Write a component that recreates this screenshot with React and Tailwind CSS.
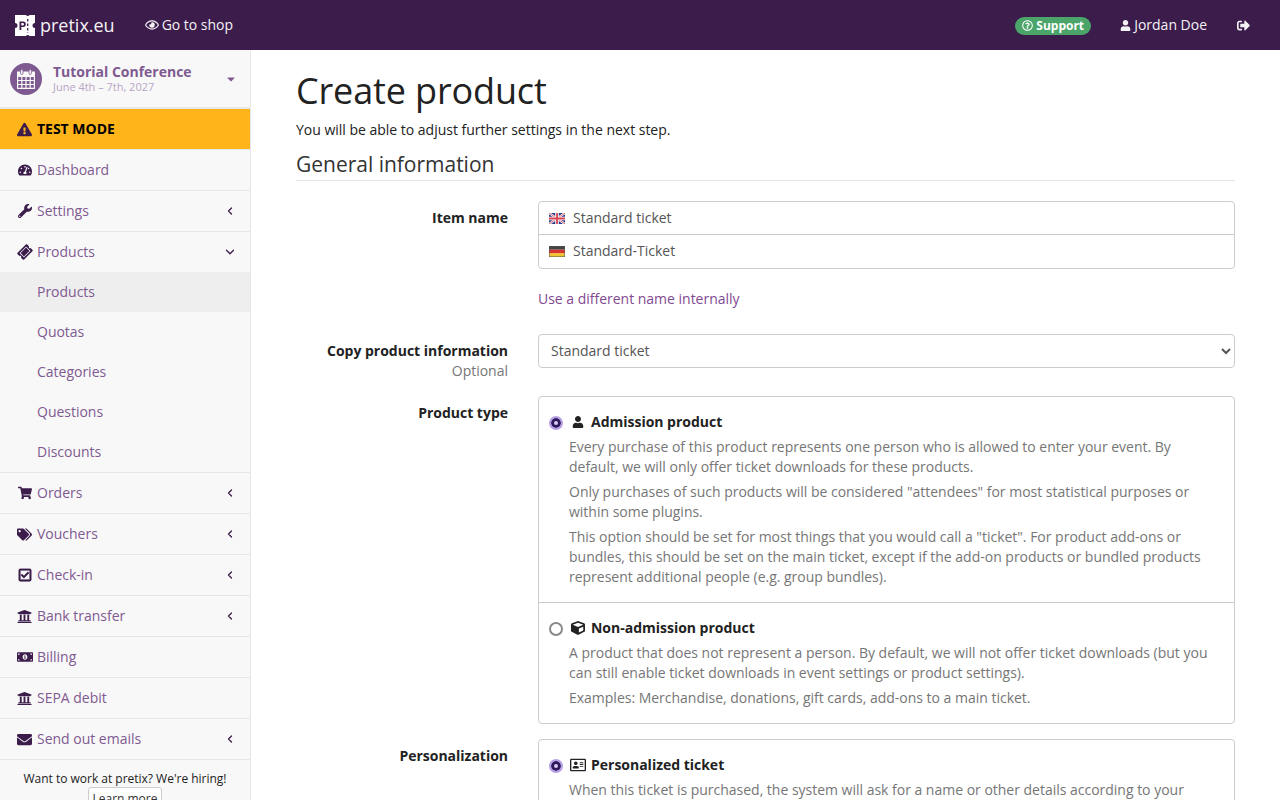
import { useState } from 'react';
import {
  FaRegEye, FaRegQuestionCircle, FaUser, FaSignOutAlt, FaCaretDown,
  FaExclamationTriangle, FaTachometerAlt, FaWrench, FaTicketAlt, FaShoppingCart, FaTags,
  FaRegCheckSquare, FaUniversity, FaMoneyBillAlt, FaEnvelope,
  FaCube, FaRegAddressCard,
} from 'react-icons/fa';
import { ChevronLeft, ChevronDown } from 'lucide-react';

const Logo = () => (
  <svg width="20" height="21" viewBox="0 0 20 21" className="shrink-0">
    <path fill="#fff" d="M0 0h11a2 2 0 0 0 3.500 0H20v8a2.500 2.500 0 0 0 0 5v8h-5.500a2 2 0 0 0-3.500 0H0v-8a2.500 2.500 0 0 0 0-5z" />
    <path stroke="#3b1c4a" strokeWidth="1.300" strokeDasharray="2.500 2" d="M12.700 4v14" />
    <path fill="#3b1c4a" d="M4.500 6.500h3.600a2.700 2.700 0 0 1 0 5.400H6.300v3.100H4.500zM6.300 8v2.400h1.500a1.200 1.200 0 0 0 0-2.400z" />
  </svg>
);

const CalendarIcon = () => (
  <svg width="18" height="20" viewBox="0 0 18 20" className="shrink-0">
    <path fill="none" stroke="#f8f8f8" strokeWidth="1.200" d="M.600 3h16.800v16.400H.600zM.600 7.500h16.800M.600 11.500h16.800M.600 15.500h16.800M4.800 7.500v11.900M9 7.500v11.900M13.200 7.500v11.900" />
    <path fill="#f8f8f8" d="M.600 3h16.800v4.500H.600z" />
    <rect x="3.600" y="0.500" width="2.400" height="5" rx="1.200" fill="#f8f8f8" stroke="#7f5a91" strokeWidth="0.800" />
    <rect x="12" y="0.500" width="2.400" height="5" rx="1.200" fill="#f8f8f8" stroke="#7f5a91" strokeWidth="0.800" />
  </svg>
);

const FlagUk = () => (
  <svg width="16" height="11" viewBox="0 0 16 11" className="shrink-0">
    <rect width="16" height="11" fill="#2b3f8f" />
    <path d="M0 0l16 11M16 0L0 11" stroke="#fff" strokeWidth="2.200" />
    <path d="M0 0l16 11M16 0L0 11" stroke="#d6424f" strokeWidth="0.800" />
    <path d="M8 0v11M0 5.500h16" stroke="#fff" strokeWidth="3.600" />
    <path d="M8 0v11M0 5.500h16" stroke="#d6424f" strokeWidth="1.800" />
  </svg>
);

const FlagDe = () => (
  <svg width="16" height="11" viewBox="0 0 16 11" className="shrink-0">
    <rect width="16" height="3.700" fill="#444" />
    <rect y="3.700" width="16" height="3.700" fill="#d8342b" />
    <rect y="7.300" width="16" height="3.700" fill="#f0c330" />
    <rect x="0.250" y="0.250" width="15.500" height="10.500" fill="none" stroke="#555" strokeWidth="0.500" />
  </svg>
);

const Arrow = ({ open }) => (
  <span className="w-[16px] flex justify-center text-[#3b1c4a] shrink-0">
    {open ? <ChevronDown size={14} strokeWidth={2.200} /> : <ChevronLeft size={12} strokeWidth={2.600} />}
  </span>
);

const NavItem = ({ icon: Icon, label, arrow, iconClass = 'text-[14px]' }) => (
  <a href="#" className="flex items-center h-[41px] shrink-0 pl-[16px] pr-[12px] border-b border-[#e7e7e7] text-[#7f5a91]">
    <span className="w-[17px] flex justify-center text-[#3b1c4a] shrink-0">
      <Icon className={iconClass} />
    </span>
    <span className="ml-[4px] flex-1">{label}</span>
    {arrow && <Arrow />}
  </a>
);

const SubItem = ({ label, active }) => (
  <a href="#" className={`flex items-center h-[40px] pl-[37px] text-[#7f5a91] ${active ? 'bg-[#eeeeee]' : ''}`}>
    {label}
  </a>
);

const Sidebar = () => (
  <aside className="w-[251px] shrink-0 bg-[#f8f8f8] border-r border-[#e7e7e7] flex flex-col">
    <div className="h-[59px] shrink-0 flex items-center pl-[10px] pr-[13px] border-b-2 border-[#e7e7e7]">
      <span className="w-[32px] h-[32px] rounded-full bg-[#7f5a91] flex items-center justify-center shrink-0">
        <CalendarIcon />
      </span>
      <div className="ml-[11px] flex-1 pt-[1px]">
        <div className="font-bold text-[#7f5a91] leading-[16px]">Tutorial Conference</div>
        <div className="text-[11px] leading-[14px] text-[#b9a5c6]">June 4th – 7th, 2027</div>
      </div>
      <FaCaretDown className="text-[#7f5a91] text-[12px]" />
    </div>
    <div className="h-[41px] shrink-0 bg-[#ffb419] flex items-center pl-[17px] border-b border-[#e7e7e7] font-bold text-black">
      <FaExclamationTriangle className="text-[#3b1c4a] text-[15px] mr-[5px]" />
      TEST MODE
    </div>
    <NavItem icon={FaTachometerAlt} label="Dashboard" />
    <NavItem icon={FaWrench} label="Settings" arrow />
    <a href="#" className="flex items-center h-[40px] shrink-0 pl-[16px] pr-[12px] text-[#7f5a91]">
      <span className="w-[17px] flex justify-center text-[#3b1c4a] shrink-0">
        <FaTicketAlt className="text-[14px] -rotate-45" />
      </span>
      <span className="ml-[4px] flex-1">Products</span>
      <Arrow open />
    </a>
    <div className="border-b border-[#e7e7e7] shrink-0">
      <SubItem label="Products" active />
      <SubItem label="Quotas" />
      <SubItem label="Categories" />
      <SubItem label="Questions" />
      <SubItem label="Discounts" />
    </div>
    <NavItem icon={FaShoppingCart} label="Orders" arrow />
    <NavItem icon={FaTags} label="Vouchers" arrow iconClass="text-[15px]" />
    <NavItem icon={FaRegCheckSquare} label="Check-in" arrow iconClass="text-[14px] [&_path]:stroke-current [&_path]:stroke-[24]" />
    <NavItem icon={FaUniversity} label="Bank transfer" arrow iconClass="text-[15px]" />
    <NavItem icon={FaMoneyBillAlt} label="Billing" iconClass="text-[16px]" />
    <NavItem icon={FaUniversity} label="SEPA debit" iconClass="text-[15px]" />
    <NavItem icon={FaEnvelope} label="Send out emails" arrow iconClass="text-[15px]" />
    <div className="text-center text-[12px] leading-[17px] text-[#222] pt-[10px] shrink-0">
      <div>Want to work at pretix? We're hiring!</div>
      <button className="border border-[#ccc] rounded-[3px] bg-white h-[22px] w-[74px] text-[12px] text-[#333] whitespace-nowrap">Learn more</button>
    </div>
  </aside>
);

const TypeOption = ({ name, value, checked, onChange, icon: Icon, title, children, iconClass }) => (
  <div className="p-[15px]">
    <label className="flex items-center h-[20px] font-bold text-[#222] relative">
      <input
        type="radio"
        name={name}
        value={value}
        checked={checked}
        onChange={onChange}
        className="appearance-none w-[14px] h-[14px] ml-[-5px] mt-[2px] rounded-full border-2 border-[#8a8a8a] bg-white checked:border-[#b7a0e6] checked:bg-[#d9cdf3] checked:shadow-[inset_0_0_0_3px_#2e1a5c] shrink-0"
      />
      <span className="w-[16px] ml-[7px] mr-[5px] flex justify-center shrink-0">
        <Icon className={iconClass} />
      </span>
      {title}
    </label>
    <div className="pl-[15px] mt-[5px] text-[#767676] flex flex-col gap-[5px]">{children}</div>
  </div>
);

const FormRow = ({ label, optional, children, className = '' }) => (
  <div className={`flex ${className}`}>
    <div className="w-[212px] shrink-0 text-right">
      <div className="font-bold text-[#222] h-[20px]">{label}</div>
      {optional && <div className="text-[#767676]">{optional}</div>}
    </div>
    <div className="ml-[30px] flex-1 min-w-0">{children}</div>
  </div>
);

export default function App() {
  const [productType, setProductType] = useState('admission');
  const [personal, setPersonal] = useState('personalized');

  return (
    <div className="h-screen overflow-hidden flex flex-col font-['Open_Sans',sans-serif] text-[14px] leading-[20px] tracking-[-0.012px] text-[#222] bg-white">
      <header className="h-[50px] shrink-0 bg-[#3b1c4a] flex items-center text-white">
        <a href="#" className="flex items-center ml-[15px]">
          <Logo />
          <span className="ml-[5px] text-[18px] text-[#f5f2f6]">pretix.eu</span>
        </a>
        <a href="#" className="flex items-center ml-[30px] text-[#f5f2f6]">
          <FaRegEye className="text-[14px] mr-[3px]" />
          Go to shop
        </a>
        <div className="ml-auto flex items-center">
          <span className="flex items-center h-[18px] w-[76px] justify-center rounded-full bg-[#4ba46a] text-[12px] font-bold mt-[1px]">
            <FaRegQuestionCircle className="text-[11px] mr-[3px]" />
            Support
          </span>
          <a href="#" className="flex items-center ml-[29px] text-[#f5f2f6]">
            <FaUser className="text-[11px] mr-[3px]" />
            Jordan Doe
          </a>
          <a href="#" className="ml-[30px] mr-[30px] text-[#f5f2f6]">
            <FaSignOutAlt className="text-[13px]" />
          </a>
        </div>
      </header>
      <div className="flex flex-1 min-h-0">
        <Sidebar />
        <main className="flex-1 min-w-0 pl-[45px] pr-[45px] overflow-hidden">
          <h1 className="text-[36px] leading-[40px] font-normal mt-[21px] text-[#222] tracking-[-0.14px]">Create product</h1>
          <p className="mt-[9px]">You will be able to adjust further settings in the next step.</p>
          <h2 className="text-[21px] leading-[23px] font-normal mt-[13px] pb-[4px] border-b border-[#e5e5e5] text-[#333]">General information</h2>

          <FormRow label="Item name" className="mt-[20px] pt-[7px]">
            <div className="mt-[-7px] border border-[#ccc] rounded-[4px] overflow-hidden">
              <div className="flex items-center h-[33px] pl-[10px] border-b border-[#ccc]">
                <FlagUk />
                <input defaultValue="Standard ticket" className="ml-[8px] flex-1 outline-none text-[#555]" />
              </div>
              <div className="flex items-center h-[33px] pl-[10px] pb-[1px]">
                <FlagDe />
                <input defaultValue="Standard-Ticket" className="ml-[8px] flex-1 outline-none text-[#555]" />
              </div>
            </div>
            <a href="#" className="block mt-[20px] text-[#7f4a91]">Use a different name internally</a>
          </FormRow>

          <FormRow label="Copy product information" optional="Optional" className="mt-[25px] pt-[7px]">
            <select defaultValue="standard" className="mt-[-7px] w-full h-[34px] border border-[#ccc] rounded-[4px] px-[8px] pb-[1px] bg-white text-[#555] outline-none">
              <option value="standard">Standard ticket</option>
            </select>
          </FormRow>

          <FormRow label="Product type" className="mt-[15px] pt-[7px]">
            <div className="mt-[-7px] border border-[#ccc] rounded-[4px] divide-y divide-[#ccc]">
              <TypeOption
                name="type"
                value="admission"
                checked={productType === 'admission'}
                onChange={() => setProductType('admission')}
                icon={FaUser}
                iconClass="text-[12px]"
                title="Admission product"
              >
                <p>Every purchase of this product represents one person who is allowed to enter your event. By default, we will only offer ticket downloads for these products.</p>
                <p>Only purchases of such products will be considered "attendees" for most statistical purposes or within some plugins.</p>
                <p>This option should be set for most things that you would call a "ticket". For product add-ons or bundles, this should be set on the main ticket, except if the add-on products or bundled products represent additional people (e.g. group bundles).</p>
              </TypeOption>
              <TypeOption
                name="type"
                value="non"
                checked={productType === 'non'}
                onChange={() => setProductType('non')}
                icon={FaCube}
                iconClass="text-[14px]"
                title="Non-admission product"
              >
                <p>A product that does not represent a person. By default, we will not offer ticket downloads (but you can still enable ticket downloads in event settings or product settings).</p>
                <p>Examples: Merchandise, donations, gift cards, add-ons to a main ticket.</p>
              </TypeOption>
            </div>
          </FormRow>

          <FormRow label="Personalization" className="mt-[15px] pt-[7px]">
            <div className="mt-[-7px] border border-[#ccc] rounded-[4px]">
              <TypeOption
                name="personal"
                value="personalized"
                checked={personal === 'personalized'}
                onChange={() => setPersonal('personalized')}
                icon={FaRegAddressCard}
                iconClass="text-[16px]"
                title="Personalized ticket"
              >
                <p>When this ticket is purchased, the system will ask for a name or other details according to your event settings.</p>
              </TypeOption>
            </div>
          </FormRow>
        </main>
      </div>
    </div>
  );
}
